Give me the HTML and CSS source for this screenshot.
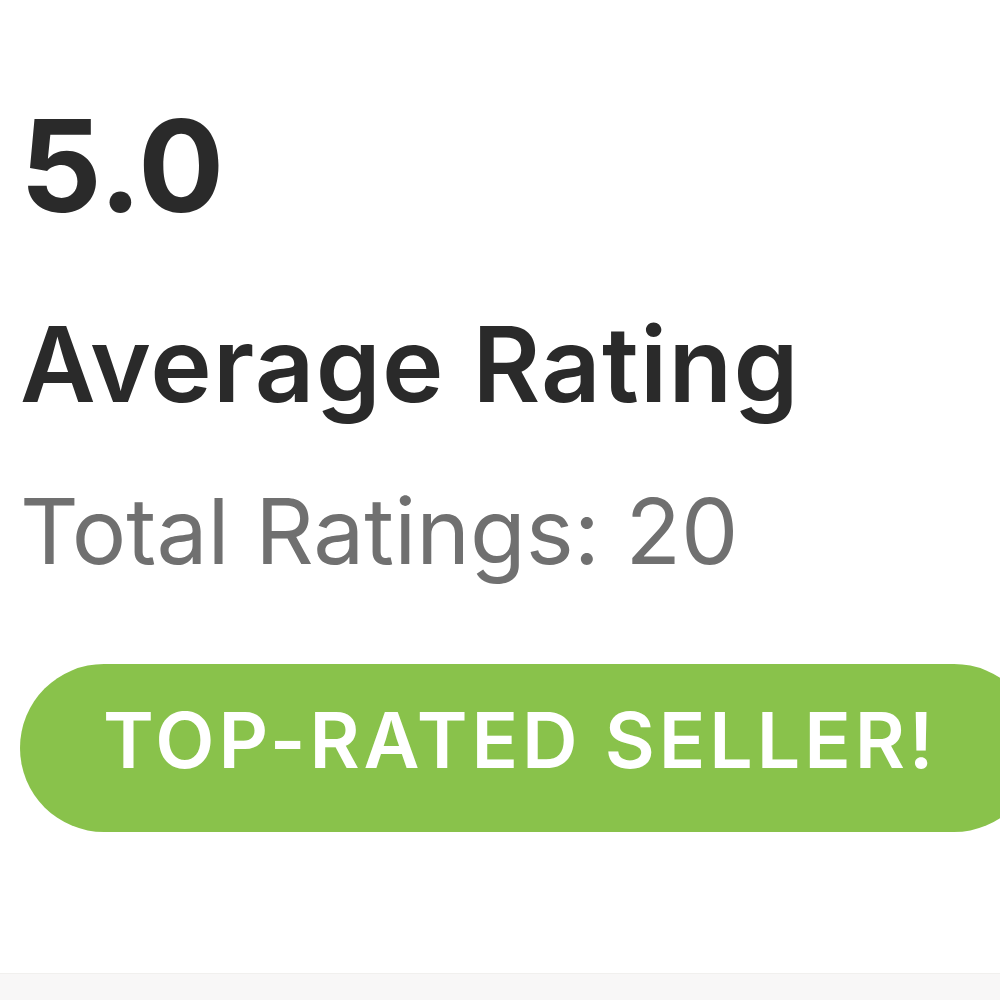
FILE: index.html
```html
<!DOCTYPE html>
<html lang="en">
<head>
    <meta charset="UTF-8">
    <meta name="viewport" content="width=device-width,initial-scale=1">
    <title>Seller Rating</title>
    <link rel="stylesheet" href="styles.css">
</head>
<body>
    <div class="rating">
        <div class="score">5.0</div>
        <h2 class="label">Average Rating</h2>
        <p class="total">Total Ratings: 20</p>
        <div class="badge">TOP-RATED SELLER!</div>
    </div>
    <div class="footer-band"></div>
</body>
</html>
```

FILE: styles.css
```css
html, body {
    margin: 0;
    padding: 0;
    background: #fff;
    overflow: hidden;
    height: 100%;
}
body {
    font-family: Inter, "Liberation Sans", sans-serif;
    display: flex;
    flex-direction: column;
}
.rating {
    padding: 102px 0 0 20px;
    flex: 1;
}
.score {
    font-size: 128px;
    line-height: 1;
    font-weight: 700;
    color: #2a2a2a;
}
.label {
    margin: 82px 0 0;
    font-size: 104px;
    line-height: 1;
    font-weight: 600;
    letter-spacing: 1.3px;
    color: #2a2a2a;
}
.total {
    margin: 70px 0 0;
    font-size: 91px;
    line-height: 1;
    font-weight: 400;
    color: #707070;
}
.badge {
    margin: 87px -38px 0 0;
    height: 168px;
    box-sizing: border-box;
    padding: 38px 0 0 83px;
    border-radius: 84px;
    background: #89c24b;
    color: #fff;
    font-size: 77px;
    line-height: 1;
    font-weight: 600;
    letter-spacing: 3.9px;
    white-space: nowrap;
}
.footer-band {
    height: 26px;
    background: #f8f7f7;
    border-top: 1px solid #f1f0ee;
}
```
